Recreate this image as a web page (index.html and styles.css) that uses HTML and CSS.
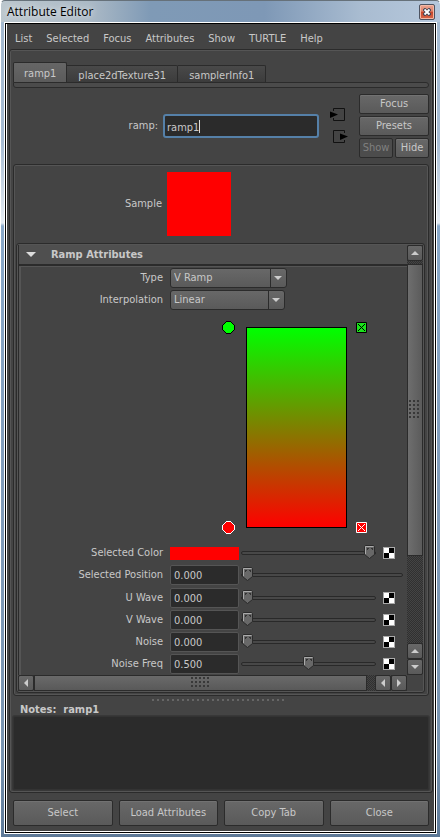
FILE: index.html
```html
<!DOCTYPE html>
<html lang="en">
<head>
<meta charset="utf-8">
<meta name="viewport" content="width=device-width, initial-scale=1">
<title>Attribute Editor</title>
<link rel="stylesheet" href="styles.css">
</head>
<body>
<div class="window">
  <header class="titlebar">
    <h1 class="title">Attribute Editor</h1>
    <button class="close" type="button" aria-label="Close window">
      <svg width="8" height="8" viewBox="0 0 8 8" aria-hidden="true"><path d="M2 2l4 4M6 2l-4 4" stroke="#3a4354" stroke-width="3.400" stroke-linecap="square"/><path d="M1.500 1.500l5 5M6.500 1.500l-5 5" stroke="#fff" stroke-width="1.800"/></svg>
    </button>
  </header>
  <div class="client">
    <nav class="menu">
      <a href="#">List</a><a href="#">Selected</a><a href="#">Focus</a><a href="#">Attributes</a><a href="#">Show</a><a href="#">TURTLE</a><a href="#">Help</a>
    </nav>
    <main class="groove editor">
      <div class="tabs" role="tablist">
        <button class="tab active" type="button" role="tab" aria-selected="true">ramp1</button>
        <button class="tab" type="button" role="tab">place2dTexture31</button>
        <button class="tab" type="button" role="tab">samplerInfo1</button>
      </div>
      <div class="tab-base"></div>
      <section class="node">
        <label class="node-label" for="node-name">ramp:</label>
        <div class="name-box"><input class="name" id="node-name" type="text" value="ramp1"></div>
        <div class="links">
          <button class="link" type="button" aria-label="Go to input connection"><svg width="20" height="14" viewBox="0 0 20 14" aria-hidden="true"><path d="M4.500 3V.5h11v12h-11V10" fill="none" stroke="#111"/><path d="M1 3.500l8 3-8 3.500z"/></svg></button>
          <button class="link" type="button" aria-label="Go to output connection"><svg width="20" height="14" viewBox="0 0 20 14" aria-hidden="true"><path d="M15.500 3V.5h-11v12h11V10" fill="none" stroke="#111"/><path d="M11 3.500l8 3-8 3.500z"/></svg></button>
        </div>
        <div class="actions">
          <button class="btn wide" type="button">Focus</button>
          <button class="btn wide" type="button">Presets</button>
          <button class="btn" type="button" disabled>Show</button>
          <button class="btn" type="button">Hide</button>
        </div>
      </section>
      <section class="groove attributes">
        <div class="sample"><span class="sample-label">Sample</span><span class="sample-color"></span></div>
        <div class="groove scroller">
          <div class="pane">
            <h2 class="section-title"><span class="arrow"></span>Ramp Attributes</h2>
            <div class="fields">
              <div class="row"><label for="type">Type</label><select class="select type" id="type"><option>V Ramp</option></select></div>
              <div class="row"><label for="interp">Interpolation</label><select class="select" id="interp"><option>Linear</option></select></div>
              <div class="ramp">
                <button class="mark" type="button" aria-label="Green entry"><svg width="13" height="13" viewBox="0 0 13 13" shape-rendering="crispEdges" aria-hidden="true"><path d="M4.500.5h4l4 4v4l-4 4h-4l-4-4v-4z" fill="#0f0" stroke="#000"/></svg></button>
                <div class="gradient"></div>
                <button class="mark" type="button" aria-label="Delete green entry"><svg width="13" height="13" viewBox="0 0 13 13" aria-hidden="true"><path d="M1.500 1.500h10v10h-10z" fill="#1be31b" stroke="#000"/><path d="M3 3l7 7M10 3l-7 7" stroke="#000"/></svg></button>
                <button class="mark low" type="button" aria-label="Red entry"><svg width="13" height="13" viewBox="0 0 13 13" shape-rendering="crispEdges" aria-hidden="true"><path d="M4.500.5h4l4 4v4l-4 4h-4l-4-4v-4z" fill="#f00" stroke="#fff"/></svg></button>
                <button class="mark low" type="button" aria-label="Delete red entry"><svg width="13" height="13" viewBox="0 0 13 13" aria-hidden="true"><path d="M1.500 1.500h10v10h-10z" fill="#f00" stroke="#fff"/><path d="M3 3l7 7M10 3l-7 7" stroke="#fff"/></svg></button>
              </div>
              <div class="row"><label for="color">Selected Color</label><button class="swatch" id="color" type="button"></button><input class="slider" type="range" value="100" aria-label="Color value"><button class="map" type="button" aria-label="Map color"></button></div>
              <div class="row position"><label for="pos">Selected Position</label><input class="num" id="pos" type="text" value="0.000"><input class="slider" type="range" value="0" aria-label="Position"></div>
              <div class="row"><label for="uw">U Wave</label><input class="num" id="uw" type="text" value="0.000"><input class="slider" type="range" value="0" aria-label="U Wave amount"><button class="map" type="button" aria-label="Map U Wave"></button></div>
              <div class="row"><label for="vw">V Wave</label><input class="num" id="vw" type="text" value="0.000"><input class="slider" type="range" value="0" aria-label="V Wave amount"><button class="map" type="button" aria-label="Map V Wave"></button></div>
              <div class="row"><label for="noise">Noise</label><input class="num" id="noise" type="text" value="0.000"><input class="slider" type="range" value="0" aria-label="Noise amount"><button class="map" type="button" aria-label="Map Noise"></button></div>
              <div class="row"><label for="freq">Noise Freq</label><input class="num" id="freq" type="text" value="0.500"><input class="slider" type="range" value="50" aria-label="Noise Freq amount"><button class="map" type="button" aria-label="Map Noise Freq"></button></div>
            </div>
          </div>
          <div class="vbar">
            <button class="step" type="button" aria-label="Scroll up"><span class="tri up"></span></button>
            <div class="vthumb"><span class="grip tall"></span></div>
            <button class="step" type="button" aria-label="Scroll up one line"><span class="tri up"></span></button>
            <button class="step" type="button" aria-label="Scroll down"><span class="tri down"></span></button>
          </div>
          <div class="hbar">
            <button class="step" type="button" aria-label="Scroll left"><span class="tri left"></span></button>
            <div class="hthumb"><span class="grip"></span></div>
            <button class="step" type="button" aria-label="Scroll left one step"><span class="tri left"></span></button>
            <button class="step" type="button" aria-label="Scroll right"><span class="tri right"></span></button>
          </div>
        </div>
      </section>
      <div class="splitter"></div>
      <label class="notes-label" for="notes">Notes:&nbsp; ramp1</label>
      <textarea class="notes" id="notes"></textarea>
    </main>
    <footer class="footer">
      <button class="btn" type="button">Select</button>
      <button class="btn" type="button">Load Attributes</button>
      <button class="btn" type="button">Copy Tab</button>
      <button class="btn" type="button">Close</button>
    </footer>
  </div>
</div>
</body>
</html>
```
FILE: styles.css
```css
* { box-sizing: border-box; }
body {
  margin: 0;
  background: #fff;
  color: #c8c8c8;
  font: 11px/14px "DejaVu Sans Condensed", "Noto Sans", sans-serif;
}
button, input, select, textarea { margin: 0; padding: 0; border: 0; font: inherit; color: inherit; }
button { display: flex; align-items: center; justify-content: center; background: none; }

/* Window frame */
.window {
  display: flex;
  flex-direction: column;
  min-height: 100vh;
  padding: 0 3px 3px;
  border: 1px solid #fff;
  border-top-color: #66717a;
  border-radius: 5px 5px 0 0;
  background:
    linear-gradient(90deg, #bcc7ce, #acbac6 20%, #7f9ab6 34%, #7e98b6 60%, #a9bcd1 82%, #b6c8dc) top / 100% 21px no-repeat,
    linear-gradient(#a5bad0 21px, #a6bbd2 140px, #e4ebf2 222px, #89a8c8 225px, #809bb9 480px, #7893af 90%, #5d7896);
}
.titlebar { display: flex; align-items: center; justify-content: space-between; height: 21px; padding: 0 2px 0 3px; }
.title { margin: 0; color: #000; font: 12px/16px "Open Sans", sans-serif; text-shadow: 0 0 6px #fff; }
.close {
  width: 16px;
  height: 16px;
  margin-top: 1px;
  border: 1px solid #4d5361;
  border-radius: 2px;
  background: linear-gradient(#eba795, #df8168 45%, #c4442a 50%, #d9694a);
  box-shadow: inset 0 0 0 1px #f3b9a5;
}
.client {
  display: flex;
  flex: 1;
  flex-direction: column;
  padding: 2px 3px 2px 4px;
  border: 1px solid #fff;
  background: #444;
  box-shadow: inset 0 0 0 1px #000, inset 0 -2px #fff, inset 2px 0 #fff, inset -2px 0 #fff;
}
.menu { display: flex; gap: 14px; padding: 7px 6px 3px; }
.menu a { color: inherit; text-decoration: none; }

.groove { border: 1px solid #2b2b2b; border-radius: 3px; box-shadow: inset 0 0 0 1px #555; }
.editor { display: flex; flex: 1; flex-direction: column; padding: 12px 3px 2px; }

/* Tabs */
.tabs { display: flex; align-items: flex-end; }
.tab {
  height: 17px;
  padding: 3px 11px 0;
  border: 1px solid #2b2b2b;
  border-width: 1px 1px 0 0;
  border-radius: 0 2px 0 0;
  background: linear-gradient(#494949, #3c3c3c);
}
.tab.active { height: 20px; padding: 3px 10px 0; border-left-width: 1px; border-radius: 2px 2px 0 0; background: linear-gradient(#666, #5b5b5b); }
.tab-base { height: 6px; border: 1px solid #2b2b2b; border-radius: 0 3px 3px 3px; background: #4b4b4b; }

/* Node name */
.node { display: flex; align-items: center; height: 76px; }
.node-label { width: 145px; text-align: right; }
.name-box { position: relative; flex: 1; height: 24px; margin-left: 5px; }
.name-box::after { content: ""; position: absolute; left: 36px; top: 6px; width: 1px; height: 13px; background: #ddd; }
.name { width: 100%; height: 24px; padding: 2px 2px 0; border: 2px solid #5580a8; border-radius: 3px; background: #2b2b2b; outline: 0; }
.links { display: flex; flex-direction: column; gap: 8px; margin: 0 10px; }
.link { width: 20px; height: 14px; }
.actions { display: grid; grid-template-columns: 34px 34px; gap: 2px; }
.btn { height: 20px; border: 1px solid #2b2b2b; border-radius: 2px; background: linear-gradient(#686868, #5a5a5a); box-shadow: inset 0 1px #727272; }
.btn:disabled { color: #808080; background: #4c4c4c; box-shadow: none; }
.wide { grid-column: span 2; }

/* Attribute panel */
.attributes { padding: 7px 3px 2px 2px; }
.sample { display: flex; align-items: center; gap: 5px; margin-bottom: 7px; }
.sample-label { width: 146px; text-align: right; }
.sample-color { width: 64px; height: 64px; background: #f00; }
.scroller { display: grid; grid-template-columns: 1fr 16px; grid-template-rows: auto 16px; padding: 1px; }
.pane { border-left: 1px solid #2b2b2b; }
.section-title {
  display: flex;
  align-items: center;
  gap: 15px;
  height: 21px;
  margin: 0;
  padding-left: 7px;
  border-bottom: 2px solid #2b2b2b;
  background: #4f4f4f;
  font-size: 11px;
}
.arrow { border: solid transparent; border-width: 5px 5px 0; border-top-color: #ddd; }
.fields { border-left: 2px solid #555; border-top: 1px solid #555; }
.row { display: grid; grid-template-columns: 142px 69px 1fr 13px; align-items: center; column-gap: 7px; height: 22px; padding-right: 11px; }
.row label { text-align: right; }
.position { grid-template-columns: 142px 69px 1fr; margin-bottom: 1px; padding-right: 4px; }
.select {
  appearance: none;
  width: 115px;
  height: 20px;
  padding: 0 3px;
  border: 1px solid #2b2b2b;
  border-radius: 3px;
  background:
    url("data:image/svg+xml,%3Csvg xmlns='http://www.w3.org/2000/svg' width='16' height='18'%3E%3Cpath d='M0 0h1v18H0z' fill='%232b2b2b'/%3E%3Cpath d='M4 7h8l-4 4z' fill='%23ccc'/%3E%3C/svg%3E") right / 16px 18px no-repeat,
    linear-gradient(#686868, #5a5a5a);
}
.type { width: 117px; }
.ramp {
  display: grid;
  grid-template-columns: 16px 101px 13px;
  grid-template-rows: 13px 1fr 13px;
  column-gap: 8px;
  width: 146px;
  height: 213px;
  margin: 10px 0 8px 201px;
}
.mark { width: 13px; height: 13px; }
.mark:nth-child(3) { grid-column: 3; grid-row: 1; }
.low { grid-row: 3; grid-column: 1; }
.low:last-child { grid-column: 3; }
.gradient { grid-row: 1 / 4; grid-column: 2; margin: 6px 0; border: 1px solid #000; background: linear-gradient(#0f0, #f00); }
.swatch { height: 13px; background: #f00; }
.num { width: 69px; height: 20px; padding: 1px 3px 0; border: 1px solid #555; border-radius: 2px; background: #2b2b2b; }
.slider { appearance: none; width: 100%; height: 16px; background: none; }
.row .slider { width: auto; margin-left: -5px; }
.slider::-webkit-slider-runnable-track { height: 4px; border: 1px solid #292929; border-radius: 2px; background: #484848; }
.slider::-webkit-slider-thumb {
  appearance: none;
  width: 11px;
  height: 14px;
  margin-top: -7px;
  background: url("data:image/svg+xml,%3Csvg xmlns='http://www.w3.org/2000/svg' width='11' height='14'%3E%3Cpath d='M.5 1.500l1-1h8l1 1v8l-5 4-5-4z' fill='%23686868' stroke='%232b2b2b'/%3E%3Cpath d='M1.500 9V1.500h8' fill='none' stroke='%23aaa'/%3E%3Cpath d='M3 3h2v1H4v1H3zM7 3h2v2H8V4H7z' fill='%23333'/%3E%3C/svg%3E");
}
.map { width: 12px; height: 12px; border: 1px solid #aaa; background: conic-gradient(#000 25%, #fff 0 50%, #000 0 75%, #fff 0); }

/* Scroll bars */
.vbar, .hbar { display: flex; background: repeating-conic-gradient(#303030 0 25%, #444 0 50%) 0 0 / 2px 2px; }
.vbar { flex-direction: column; }
.step { flex: none; width: 16px; height: 16px; border: 1px solid #2b2b2b; border-radius: 2px; background: linear-gradient(#686868, #5a5a5a); }
.tri { border: 4px solid transparent; }
.up { border-top: 0; border-bottom-color: #ccc; }
.down { border-bottom: 0; border-top-color: #ccc; }
.left { border-left: 0; border-right-color: #ccc; }
.right { border-right: 0; border-left-color: #ccc; }
.vthumb, .hthumb { display: flex; align-items: center; justify-content: center; border: 1px solid #2b2b2b; }
.vthumb { flex: 1; margin: 3px 0 87px; background: linear-gradient(90deg, #6e6e6e, #5b5b5b); }
.hthumb { flex: 1; margin-right: 8px; background: linear-gradient(#6a6a6a, #595959); }
.grip { width: 20px; height: 12px; background: conic-gradient(from 270deg at 2px 2px, #383838 25%, transparent 0) 0 0 / 4px 4px; }
.tall { width: 12px; height: 20px; }

/* Notes */
.splitter { width: 133px; height: 3px; margin: 3px 0 0 139px; background: conic-gradient(from 270deg at 2px 2px, #666 25%, transparent 0) 0 0 / 5px 3px; }
.notes-label { padding: 1px 7px 0; font-weight: bold; line-height: 13px; }
.notes { display: block; flex: 1; width: 100%; min-height: 60px; border: 1px solid #333; border-radius: 2px; background: #2b2b2b; box-shadow: 0 0 0 1px #383838; resize: none; outline: 0; }
.footer { display: grid; grid-template-columns: repeat(4, 1fr); gap: 6px; padding: 7px 4px 5px; }
.footer .btn { height: 26px; }
```
